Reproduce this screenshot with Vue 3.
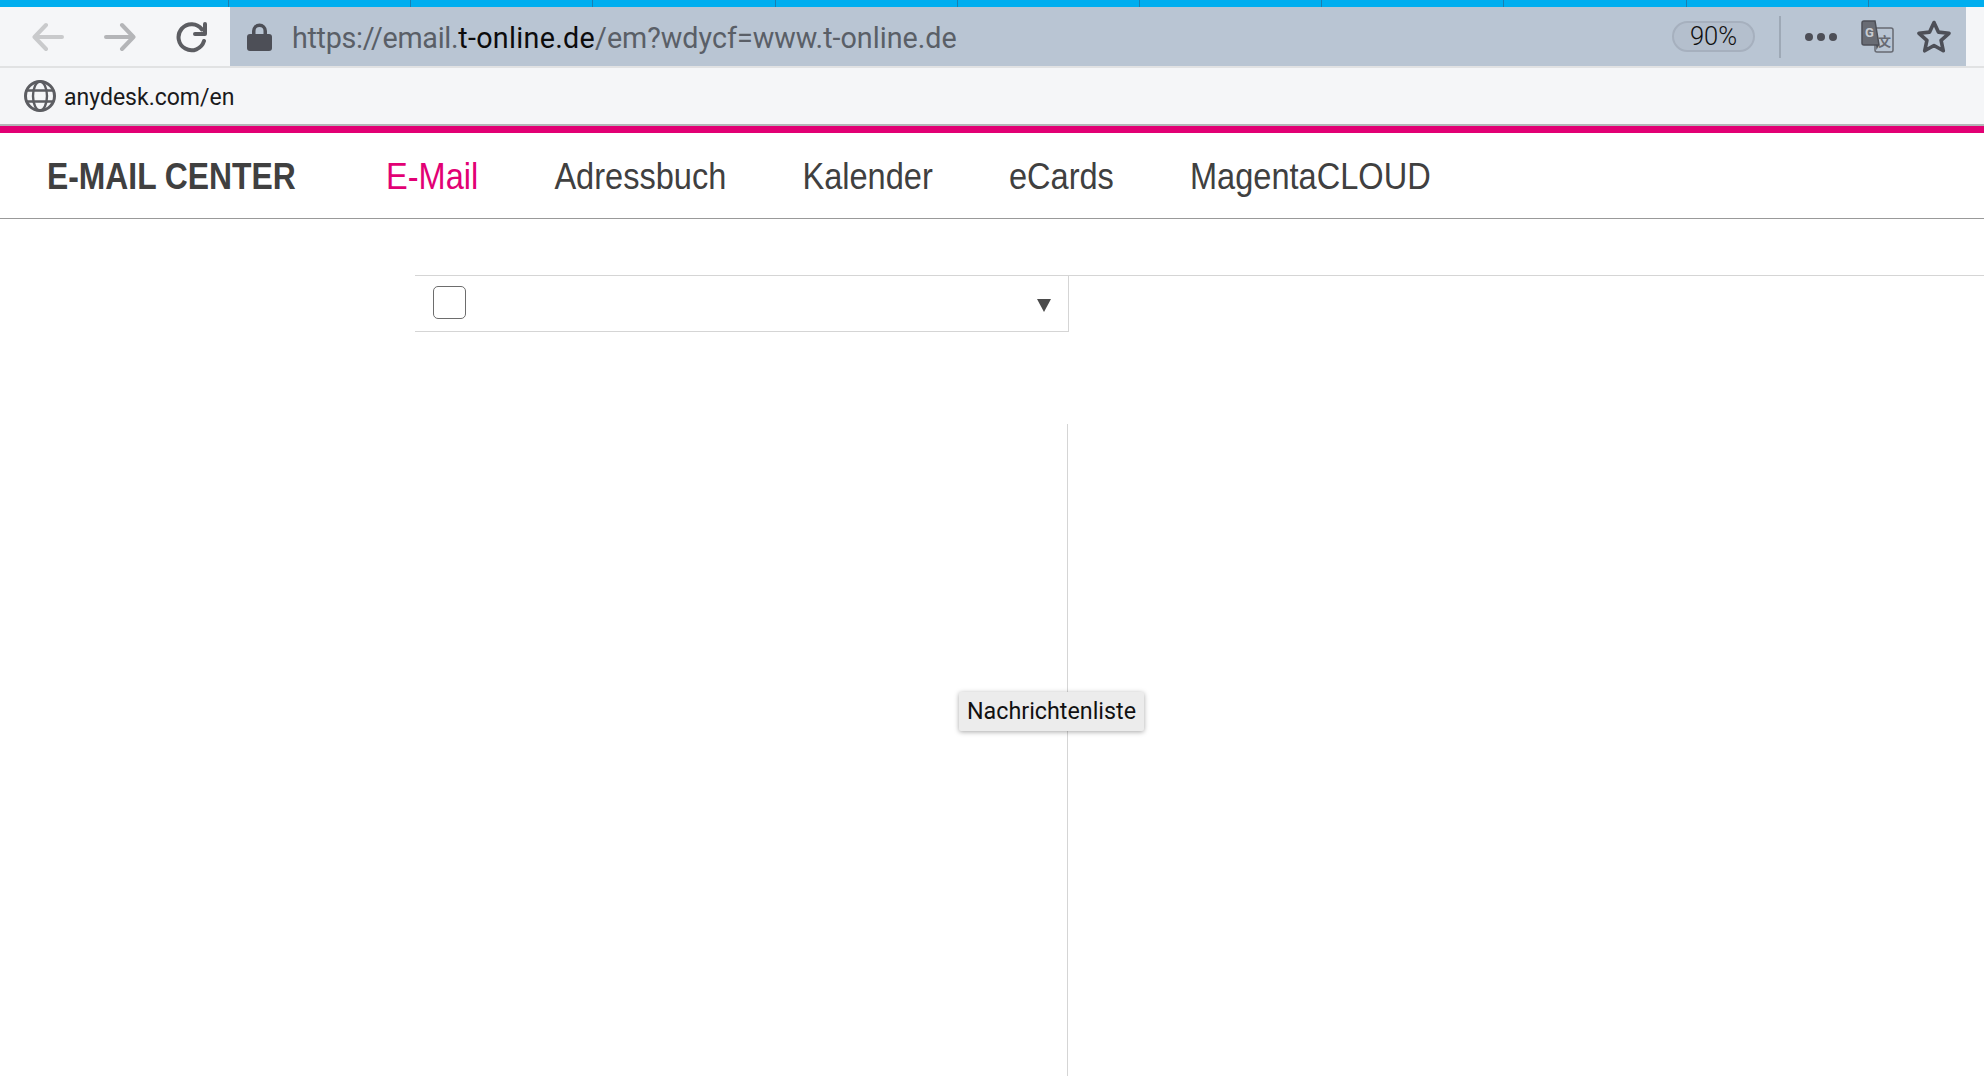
<template>
  <div class="page">
    <!-- browser chrome -->
    <div class="tab-strip">
      <span v-for="n in 10" :key="n" class="tab-sep"></span>
    </div>

    <div class="toolbar">
      <div class="nav-btns">
        <svg class="arrow" width="32" height="32" viewBox="0 0 32 32" fill="none" stroke="#c9cacc" stroke-width="4" stroke-linecap="round" stroke-linejoin="round">
          <path d="M30 16H3M14 4 2.5 16 14 28" />
        </svg>
        <svg class="arrow" width="32" height="32" viewBox="0 0 32 32" fill="none" stroke="#b4b5b8" stroke-width="4" stroke-linecap="round" stroke-linejoin="round">
          <path d="M2 16h27M18 4l11.5 12L18 28" />
        </svg>
        <svg class="reload" width="32" height="32" viewBox="0 0 32 32" fill="none" stroke="#5c5d62" stroke-width="4" stroke-linecap="round" stroke-linejoin="round">
          <path d="M26 8.500A13 13 0 1 0 28 20" />
          <path d="M29 3v10H19" />
        </svg>
      </div>

      <div class="url-bar">
        <svg class="lock" width="25" height="28" viewBox="0 0 25 28">
          <path d="M5 12V8a7.500 7.500 0 0 1 15 0v4h-3.500V8a4 4 0 0 0-8 0v4z" fill="#4d4f57" />
          <rect x="0" y="11" width="25" height="17" rx="3" fill="#4d4f57" />
        </svg>
        <span class="url-text"><span class="url-scheme">https://email.</span><b class="url-host">t-online.de</b>/em?wdycf=www.t-online.de</span>
        <span class="zoom-pill">90%</span>
        <span class="url-divider"></span>
        <span class="dots"><i></i><i></i><i></i></span>
        <svg class="translate" width="33" height="33" viewBox="0 0 33 33">
          <rect x="14" y="8" width="18" height="24" rx="2" fill="none" stroke="#676a72" stroke-width="1.500" />
          <text x="23.500" y="26" class="translate-zh">文</text>
          <path d="M1 3a2 2 0 0 1 2-2h11l4 24H3a2 2 0 0 1-2-2z" fill="#696c74" stroke="#4d4f57" stroke-width="1.500" />
          <path d="M15 25h3l-2.500 5z" fill="#4d4f57" />
          <text x="8.500" y="17" class="translate-g">G</text>
        </svg>
        <svg class="star" width="34" height="33" viewBox="0 0 34 33" fill="none" stroke="#4d4f57" stroke-width="3.600" stroke-linejoin="round">
          <path d="M17 2.500l4.400 9.600 10.600 1.200-7.900 7.100 2.200 10.400L17 25.500 7.700 30.800l2.200-10.400L2 13.300l10.600-1.200z" />
        </svg>
      </div>
    </div>

    <div class="bookmarks">
      <svg width="32" height="32" viewBox="0 0 32 32" fill="none" stroke="#5c5d62" stroke-width="2.400">
        <circle cx="16" cy="16" r="14.500" stroke-width="3" />
        <ellipse cx="16" cy="16" rx="7" ry="14.500" />
        <path d="M3 10.500h26M3 21.500h26" />
      </svg>
      <span class="bookmark-label">anydesk.com/en</span>
    </div>

    <!-- portal -->
    <header class="portal-nav">
      <span class="brand">E-MAIL CENTER</span>
      <nav class="nav-links">
        <a
          v-for="link in links"
          :key="link"
          class="nav-link"
          :class="{ active: link === 'E-Mail' }"
        >{{ link }}</a>
      </nav>
    </header>

    <main class="mail">
      <div class="list-head">
        <div class="selector">
          <span class="checkbox"></span>
          <span class="caret"></span>
        </div>
      </div>
      <div class="list-body"></div>
      <div class="tooltip">Nachrichtenliste</div>
    </main>
  </div>
</template>

<script setup>
const links = ['E-Mail', 'Adressbuch', 'Kalender', 'eCards', 'MagentaCLOUD']
</script>

<style scoped>
.page {
  display: flex;
  flex-direction: column;
  height: 1076px;
  background: #fff;
  font-family: Roboto, "Liberation Sans", sans-serif;
}

.tab-strip {
  display: flex;
  height: 7px;
  padding-left: 228px;
  background: #00aeef;
  flex: none;
}

.tab-sep {
  width: 182.2px;
  flex: none;
  box-sizing: border-box;
  border-left: 1px solid #1b7fb0;
}

.toolbar {
  display: flex;
  height: 59px;
  flex: none;
  background: #f5f6f8;
  border-bottom: 2px solid #e1e2e3;
  box-sizing: content-box;
}

.nav-btns {
  display: flex;
  align-items: center;
  gap: 40px;
  width: 230px;
  padding-left: 32px;
  box-sizing: border-box;
  flex: none;
}

.url-bar {
  display: flex;
  align-items: center;
  flex: 1;
  margin-right: 18px;
  padding-left: 17px;
  padding-right: 15px;
  background: #b9c5d3;
}

.url-text {
  margin-left: 20px;
  padding-top: 2px;
  font-size: 28.7px;
  color: #5a5f67;
  white-space: nowrap;
}

.url-scheme {
  letter-spacing: -0.3px;
}

.url-host {
  font-weight: 400;
  letter-spacing: 0.3px;
  color: #0c0c0d;
}

.zoom-pill {
  margin-left: auto;
  width: 83px;
  height: 31px;
  box-sizing: border-box;
  border: 2px solid #a6b0be;
  border-radius: 16px;
  background: #b4bfcd;
  color: #111;
  font-size: 25.5px;
  font-weight: 300;
  line-height: 27px;
  text-align: center;
}

.url-divider {
  width: 2px;
  height: 42px;
  margin-left: 24px;
  background: #9ea9b6;
}

.dots {
  display: flex;
  gap: 4px;
  margin-left: 24px;
}

.dots i {
  width: 8px;
  height: 8px;
  border-radius: 50%;
  background: #4d4f57;
}

.translate {
  margin-left: 24px;
}

.translate-g {
  font-family: Roboto, sans-serif;
  font-size: 13px;
  font-weight: 700;
  fill: #c9ccd2;
  text-anchor: middle;
}

.translate-zh {
  font-family: "Noto Sans CJK SC", sans-serif;
  font-size: 13px;
  font-weight: 700;
  fill: #676a72;
  text-anchor: middle;
}

.star {
  margin-left: 23px;
}

.bookmarks {
  display: flex;
  align-items: center;
  gap: 8px;
  height: 56px;
  flex: none;
  padding-left: 24px;
  background: #f5f6f8;
  border-bottom: 2px solid #b4b5b7;
  box-sizing: content-box;
  font-size: 23px;
  color: #1a1a1c;
}

.bookmark-label {
  padding-top: 2px;
}

.portal-nav {
  display: flex;
  align-items: center;
  flex: none;
  padding-left: 47px;
  padding-top: 2px;
  box-sizing: content-box;
  height: 83px;
  border-top: 7px solid #e20074;
  border-bottom: 1px solid #999;
  font-family: "Liberation Sans", Arial, sans-serif;
  color: #404040;
}

/* no condensed face installed, so the nav text is narrowed */
.brand {
  width: 249px;
  font-size: 37px;
  font-weight: 700;
  white-space: nowrap;
  transform: scaleX(0.86);
  transform-origin: left center;
}

.nav-links {
  display: flex;
  gap: 86.5px;
  margin-left: 89.5px;
  transform: scaleX(0.88);
  transform-origin: left center;
}

.nav-link {
  font-size: 37px;
  white-space: nowrap;
}

.nav-link.active {
  color: #e20074;
}

.mail {
  position: relative;
  flex: 1;
  padding-left: 415px;
  padding-top: 56px;
  min-height: 0;
}

.list-head {
  border-top: 1px solid #d5d5d5;
}

.selector {
  display: flex;
  align-items: center;
  justify-content: space-between;
  width: 654px;
  height: 56px;
  padding: 0 17px 0 18px;
  box-sizing: border-box;
  border-right: 1px solid #d5d5d5;
  border-bottom: 1px solid #d5d5d5;
}

.checkbox {
  width: 33px;
  height: 33px;
  box-sizing: border-box;
  border: 1.5px solid #6d6d6d;
  border-radius: 5px;
  margin-bottom: 2px;
}

.caret {
  width: 0;
  height: 0;
  margin-top: 3px;
  border-left: 7.500px solid transparent;
  border-right: 7.500px solid transparent;
  border-top: 13px solid #4b4b4b;
}

.list-body {
  width: 652px;
  height: 652px;
  margin-top: 92px;
  border-right: 1px solid #d5d5d5;
}

.tooltip {
  position: absolute;
  left: 959px;
  top: 473px;
  width: 185px;
  height: 39px;
  box-sizing: border-box;
  background: #ececec;
  border-radius: 2px;
  box-shadow: 0 1px 5px rgba(0, 0, 0, 0.35);
  color: #111;
  font-size: 23.3px;
  line-height: 38px;
  text-align: center;
  white-space: nowrap;
}
</style>

<style>
html,
body {
  margin: 0;
  overflow: hidden;
  background: #fff;
}
</style>
